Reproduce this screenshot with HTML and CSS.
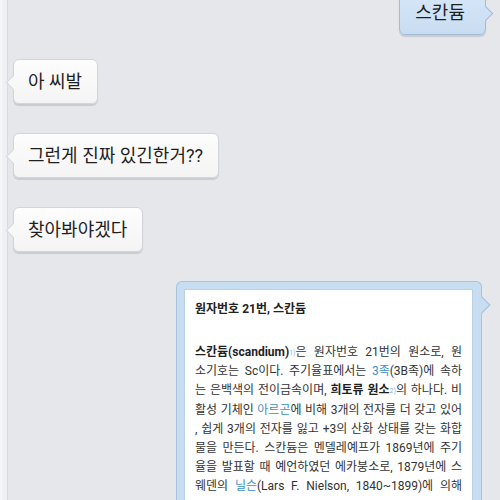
FILE: index.html
```html
<!DOCTYPE html>
<html lang="ko">
<head>
<meta charset="UTF-8">
<meta name="viewport" content="width=device-width, initial-scale=1.0">
<title>채팅</title>
<link rel="stylesheet" href="styles.css">
</head>
<body>

<div class="page">
  <div class="strip"></div>
  <div class="chat">
    <div class="row sent first">
      <div class="bubble me">스칸듐</div>
    </div>
    <div class="row second">
      <div class="bubble">아 씨발</div>
    </div>
    <div class="row">
      <div class="bubble">그런게 진짜 있긴한거??</div>
    </div>
    <div class="row">
      <div class="bubble">찾아봐야겠다</div>
    </div>
    <div class="row sent">
      <div class="card">
        <div class="card-inner">
          <div class="card-title">원자번호 21번, 스칸듐</div>
          <div class="card-text">
            <span class="ln"><b>스칸듐(scandium)</b><sup>1)</sup>은 원자번호 21번의 원소로, 원</span>
            <span class="ln">소기호는 Sc이다. 주기율표에서는 <a>3족</a>(3B족)에 속하</span>
            <span class="ln">는 은백색의 전이금속이며, <b>희토류 원소</b><sup>2)</sup>의 하나다. 비</span>
            <span class="ln">활성 기체인 <a>아르곤</a>에 비해 3개의 전자를 더 갖고 있어</span>
            <span class="ln">, 쉽게 3개의 전자를 잃고 +3의 산화 상태를 갖는 화합</span>
            <span class="ln">물을 만든다. 스칸듐은 멘델레예프가 1869년에 주기</span>
            <span class="ln">율을 발표할 때 예언하였던 에카붕소로, 1879년에 스</span>
            <span class="ln">웨덴의 <a>닐슨</a>(Lars F. Nielson, 1840~1899)에 의해</span>
          </div>
        </div>
      </div>
    </div>
  </div>
</div>

</body>
</html>
```

FILE: styles.css
```css
html, body {
  margin: 0;
  height: 500px;
  overflow: hidden;
}
body {
  background-color: #e5e7eb;
  font-family: Roboto, "Noto Sans CJK KR", sans-serif;
  color: #222;
}
.page {
  display: flex;
  height: 500px;
}
.strip {
  width: 5px;
  flex: none;
  background-color: #eef0f3;
  border-left: 2px solid #f6f7f9;
  border-right: 1px solid #d9dbe0;
}
.chat {
  flex: 1;
  display: flex;
  flex-direction: column;
  padding: 0 14px 0 5px;
}
.row {
  display: flex;
  margin-top: 29px;
}
.row.first {
  margin-top: -10px;
}
.row.second {
  margin-top: 24px;
}
.row.sent {
  justify-content: flex-end;
}
.bubble {
  position: relative;
  font-size: 18px;
  line-height: 19px;
  padding: 12px 15px 12px 14px;
  background: linear-gradient(#fdfdfd, #f4f4f5);
  border: 1px solid #d3d5da;
  border-radius: 6px;
  box-shadow: 0 2px 1px rgba(0, 0, 0, 0.12);
  color: #1f1f1f;
}
.bubble::before {
  content: "";
  position: absolute;
  left: -6px;
  top: 50%;
  width: 10px;
  height: 10px;
  margin-top: -5px;
  background: #f8f8f9;
  border-left: 1px solid #d3d5da;
  border-bottom: 1px solid #d3d5da;
  transform: rotate(45deg);
}
.bubble.me {
  padding: 12px 20px 12px 15px;
  background: linear-gradient(#d6e7f8, #c9ddf2);
  border-color: #a3bcd6;
}
.bubble.me::before {
  left: auto;
  right: -6px;
  background: #cfe2f5;
  border: none;
  border-top: 1px solid #a3bcd6;
  border-right: 1px solid #a3bcd6;
}
.card {
  position: relative;
  margin-right: 4px;
  width: 289px;
  padding: 7px 8px 0 7px;
  background: #c7ddf1;
  border: 1px solid #a9c3dc;
  border-bottom: none;
  border-radius: 6px 6px 0 0;
}
.card::before {
  content: "";
  position: absolute;
  right: -7px;
  top: 17px;
  width: 11px;
  height: 11px;
  background: #c7ddf1;
  border-top: 1px solid #a9c3dc;
  border-right: 1px solid #a9c3dc;
  transform: rotate(45deg);
}
.card-inner {
  background: #fff;
  border: 1px solid #bcd0e3;
  border-bottom: none;
  padding: 10px 10px 0 10px;
  height: 230px;
}
.card-title {
  font-size: 12px;
  font-weight: bold;
  line-height: 19px;
  color: #222;
}
.card-text {
  margin-top: 24px;
  font-size: 12px;
  line-height: 19.2px;
  color: #333;
}
.ln {
  display: block;
  white-space: nowrap;
  text-align: justify;
  text-align-last: justify;
}
.card-text b {
  color: #1f1f1f;
}
.card-text a {
  color: #3d8fc1;
}
.card-text sup {
  font-size: 7px;
  line-height: 0;
  color: #8fb6d8;
  vertical-align: 1px;
}
```
